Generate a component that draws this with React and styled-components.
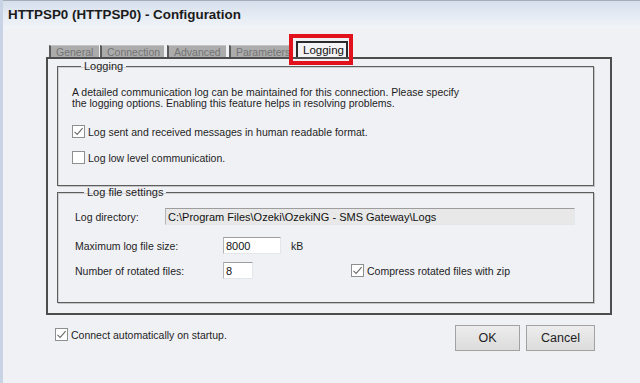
import React from 'react';
import styled, { createGlobalStyle } from 'styled-components';

const GlobalStyle = createGlobalStyle`
  html, body {
    margin: 0;
    padding: 0;
    background: #f0f1f5;
  }
  body {
    font-family: "Liberation Sans", Arial, sans-serif;
    font-size: 10.5px;
    color: #1e1e1e;
  }
`;

const Window = styled.div`
  width: 640px;
  height: 383px;
  box-sizing: border-box;
  display: flex;
  flex-direction: column;
  background: #f0f1f5;
  border-left: 3px solid #c8d4e6;
  overflow: hidden;
`;

const TitleBar = styled.div`
  height: 29px;
  box-sizing: border-box;
  display: flex;
  align-items: center;
  padding: 0 0 2px 5px;
  border-top: 1px solid #a3acb9;
  background: linear-gradient(to bottom, #d6dfeb 0%, #e6ecf4 55%, #f2f4f8 100%);
  font-size: 13.4px;
  font-weight: bold;
  color: #1b1b1b;
`;

const Body = styled.div`
  display: flex;
  flex-direction: column;
  padding: 0 25px 0 43px;
`;

const TabStrip = styled.div`
  display: flex;
  align-items: flex-end;
  height: 16px;
  margin-top: 12px;
  padding-left: 3px;
`;

const Tab = styled.div`
  position: relative;
  box-sizing: border-box;
  height: ${(p) => (p.$active ? '16px' : '12px')};
  width: ${(p) => p.$w}px;
  margin-right: ${(p) => p.$gap}px;
  display: flex;
  align-items: center;
  padding-left: 5px;
  line-height: 12px;
  white-space: nowrap;
  background: ${(p) => (p.$active ? '#f3f3f5' : '#acacac')};
  color: ${(p) => (p.$active ? '#111' : '#747474')};
  border-left: 2px solid ${(p) => (p.$active ? '#2a2a2a' : '#5a5a5a')};
  border-top: ${(p) => (p.$active ? '2px solid #2a2a2a' : '1px solid #c4c4c4')};
  border-right: ${(p) => (p.$active ? '2px solid #2a2a2a' : 'none')};
  font-size: ${(p) => (p.$active ? '11.5px' : '10.5px')};
`;

const Highlight = styled.div`
  position: absolute;
  left: -9px;
  top: -9px;
  width: 64px;
  height: 31px;
  box-sizing: border-box;
  border: 4px solid #e2121c;
  pointer-events: none;
`;

const Panel = styled.div`
  width: 566px;
  height: 258px;
  box-sizing: border-box;
  border: 2px solid #4d4d4d;
  padding: 1px 16px 0 9px;
  display: flex;
  flex-direction: column;
`;

const Group = styled.fieldset`
  margin: 0;
  padding: ${(p) => p.$pad};
  height: ${(p) => p.$h}px;
  box-sizing: border-box;
  border: 1px solid #5e5e5e;
  box-shadow: 1px 1px 0 #c4c4c4, inset 1px 1px 0 #d0d0d0;
  min-width: 0;
`;

const Legend = styled.legend`
  margin-left: 9px;
  padding: 0 3px;
  line-height: 13px;
  font-size: 11px;
  color: #1e1e1e;
`;

const Description = styled.p`
  margin: 14px 0 0;
  line-height: 11px;
  font-size: 10.5px;
  color: #1e1e1e;
`;

const CheckRow = styled.label`
  display: flex;
  align-items: center;
  gap: 3px;
  margin-top: ${(p) => p.$mt || 0}px;
  margin-left: ${(p) => p.$ml || 0}px;
  font-size: 10.5px;
  color: #1e1e1e;
  white-space: nowrap;
`;

const Box = styled.span`
  width: 13px;
  height: 13px;
  box-sizing: border-box;
  border: 1px solid #8e8f8f;
  background: #fff;
  display: flex;
  align-items: center;
  justify-content: center;
  flex: none;
`;

const FieldRow = styled.div`
  display: flex;
  align-items: center;
  margin-top: ${(p) => p.$mt}px;
  height: 17px;
`;

const FieldLabel = styled.span`
  width: ${(p) => p.$w}px;
  flex: none;
  font-size: 10.5px;
  color: #1e1e1e;
`;

const TextBox = styled.div`
  box-sizing: border-box;
  height: 17px;
  width: ${(p) => p.$w}px;
  padding: 1px 2px 0;
  line-height: 14px;
  font-size: 11px;
  color: #111;
  background: ${(p) => (p.$readOnly ? '#e8e8e8' : '#fff')};
  border-top: 1px solid #9d9d9d;
  border-left: 1px solid #b5b5b5;
  border-right: 1px solid #e3e6ea;
  border-bottom: 1px solid #e3e6ea;
  white-space: nowrap;
  overflow: hidden;
`;

const Unit = styled.span`
  margin-left: 10px;
  font-size: 10.5px;
`;

const Footer = styled.div`
  display: flex;
  justify-content: space-between;
  align-items: flex-start;
  padding: 10px 20px 0 9px;
`;

const Buttons = styled.div`
  display: flex;
  gap: 6px;
`;

const Button = styled.button`
  width: ${(p) => p.$w}px;
  height: 26px;
  box-sizing: border-box;
  border: 1px solid #a2a2a2;
  border-radius: 0;
  background: linear-gradient(to bottom, #ededed 0%, #e4e4e4 50%, #dcdcdc 100%);
  font-family: "Liberation Sans", Arial, sans-serif;
  font-size: 12.5px;
  color: #1e1e1e;
  padding: 0;
`;

const Check = () => (
  <svg width="11" height="11" viewBox="0 0 11 11">
    <path d="M1.5 5.8 L4.2 8.4 L9.6 2.2" fill="none" stroke="#6b6b6b" strokeWidth="1.1" />
  </svg>
);

const CheckBox = ({ checked, children, mt, ml }) => (
  <CheckRow $mt={mt} $ml={ml}>
    <Box>{checked && <Check />}</Box>
    {children}
  </CheckRow>
);

const tabs = [
  { name: 'General', w: 50, gap: 1 },
  { name: 'Connection', w: 64, gap: 3 },
  { name: 'Advanced', w: 59, gap: 3 },
  { name: 'Parameters', w: 62, gap: 5 },
];

export default function App() {
  return (
    <>
      <GlobalStyle />
      <Window>
        <TitleBar>HTTPSP0 (HTTPSP0) - Configuration</TitleBar>
        <Body>
          <TabStrip>
            {tabs.map((t) => (
              <Tab key={t.name} $w={t.w} $gap={t.gap}>
                {t.name}
              </Tab>
            ))}
            <Tab $active $w={52} $gap={0}>
              Logging
              <Highlight />
            </Tab>
          </TabStrip>
          <Panel>
            <Group $h={126} $pad="0 12px 0 14px">
              <Legend>Logging</Legend>
              <Description>
                A detailed communication log can be maintained for this connection. Please specify
                <br />
                the logging options. Enabling this feature helps in resolving problems.
              </Description>
              <CheckBox checked mt={16}>
                Log sent and received messages in human readable format.
              </CheckBox>
              <CheckBox mt={13}>Log low level communication.</CheckBox>
            </Group>
            <Group $h={117} $pad="0 17px 0 17px">
              <Legend>Log file settings</Legend>
              <FieldRow $mt={9}>
                <FieldLabel $w={90}>Log directory:</FieldLabel>
                <TextBox $readOnly $w={410}>
                  C:\Program Files\Ozeki\OzekiNG - SMS Gateway\Logs
                </TextBox>
              </FieldRow>
              <FieldRow $mt={12}>
                <FieldLabel $w={148}>Maximum log file size:</FieldLabel>
                <TextBox $w={58}>8000</TextBox>
                <Unit>kB</Unit>
              </FieldRow>
              <FieldRow $mt={8}>
                <FieldLabel $w={148}>Number of rotated files:</FieldLabel>
                <TextBox $w={30}>8</TextBox>
                <CheckBox checked ml={98}>
                  Compress rotated files with zip
                </CheckBox>
              </FieldRow>
            </Group>
          </Panel>
          <Footer>
            <CheckBox checked mt={3}>
              Connect automatically on startup.
            </CheckBox>
            <Buttons>
              <Button $w={65}>OK</Button>
              <Button $w={69}>Cancel</Button>
            </Buttons>
          </Footer>
        </Body>
      </Window>
    </>
  );
}
